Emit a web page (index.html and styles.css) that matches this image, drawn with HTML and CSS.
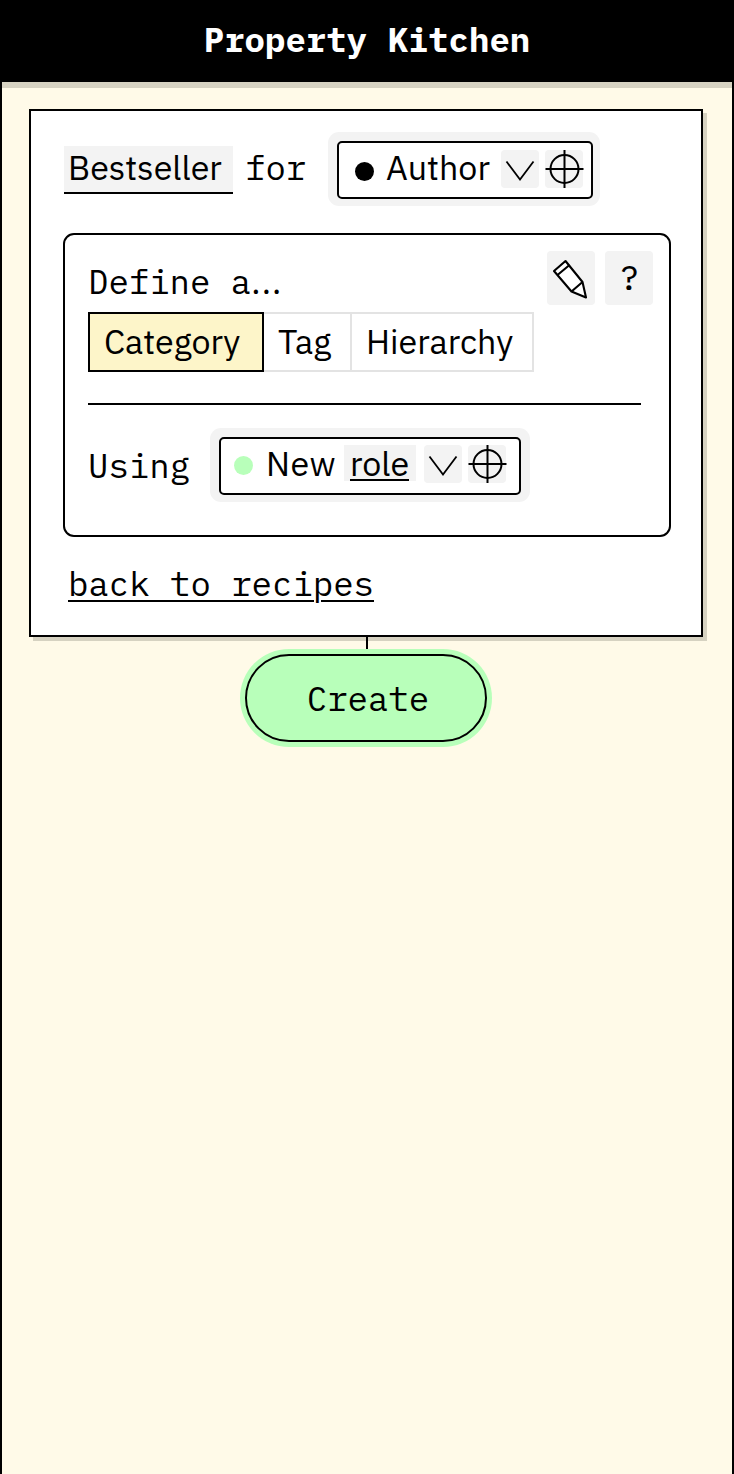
FILE: index.html
```html
<!DOCTYPE html>
<html lang="en">
<head>
<meta charset="utf-8">
<title>Property Kitchen</title>
<link rel="stylesheet" href="styles.css">
</head>
<body>
<div class="app">
  <header class="header"><h1 class="title">Property Kitchen</h1></header>
  <main class="main">
    <section class="card">
      <div class="subject">
        <span class="name-field"><span class="t-bestseller">Bestseller</span></span>
        <span class="for">for</span>
        <div class="picker picker-author">
          <i class="dot"></i>
          <span class="sans t-author">Author</span>
          <svg class="icon chevron" viewBox="0 0 38 38"><path d="M5.500 11.500L19 29.500L32.500 11.500"/></svg>
          <svg class="icon" viewBox="0 0 38 38"><circle cx="19.500" cy="19" r="14"/><path d="M.5 19H38.500M19.500 0V38"/></svg>
        </div>
      </div>
      <div class="panel">
        <div class="panel-head">
          <span class="label">Define a<span class="ellipsis">...</span></span>
          <div class="tools">
            <button class="tool"><svg class="pencil" viewBox="0 0 48 54"><path class="body" d="M7 20L18.500 10L35.500 31L39 46.500L24.500 40.500Z"/><path d="M10.500 24L22.500 14M24.500 40.500L35.500 31"/></svg></button>
            <button class="tool help">?</button>
          </div>
        </div>
        <div class="tabs">
          <button class="tab active"><span class="t-category">Category</span></button>
          <button class="tab tab-tag"><span class="t-tag">Tag</span></button>
          <button class="tab tab-hier"><span class="t-hier">Hierarchy</span></button>
        </div>
        <hr class="divider">
        <div class="using">
          <span class="label using-label">Using</span>
          <div class="picker picker-role">
            <i class="dot green"></i>
            <span class="sans t-new">New</span>
            <span class="role"><span class="role-text">role</span></span>
            <svg class="icon chevron" viewBox="0 0 38 38"><path d="M5.500 11.500L19 29.500L32.500 11.500"/></svg>
            <svg class="icon" viewBox="0 0 38 38"><circle cx="19.500" cy="19" r="14"/><path d="M.5 19H38.500M19.500 0V38"/></svg>
          </div>
        </div>
      </div>
      <a class="back">back to recipes</a>
    </section>
    <div class="connector"></div>
    <button class="create">Create</button>
  </main>
</div>
</body>
</html>
```
FILE: styles.css
```css
* { box-sizing: border-box; }
body { margin: 0; background: #fffae8; color: #000; font: 34px/44px "IBM Plex Mono", "Liberation Mono", monospace; }
button { margin: 0; padding: 0; border: 0; background: none; color: inherit; font: inherit; }
.app { min-height: 1474px; border: solid #000; border-width: 0 2px; }
.header { height: 82px; background: #000; color: #fff; box-shadow: 0 6px #d6d2c1; text-align: center; }
.title { margin: 0; padding-top: 17px; font-size: 34px; line-height: 44px; font-weight: 700; }
.main { display: flex; flex-direction: column; align-items: center; padding-top: 27px; }
.card { width: 674px; height: 528px; margin-right: 2px; border: 2px solid #000; background: #fff; box-shadow: 4px 4px #d6d2c1; padding: 21px 30px 0 32px; white-space: nowrap; }
.subject { display: flex; height: 74px; }
.name-field { width: 169px; height: 48px; margin: 14px 0 0 1px; padding-left: 4px; background: #f3f3f3; border-bottom: 2px solid #000; line-height: 42px; }
.name-field, .sans, .tab, .role { font-family: "IBM Plex Sans", "Open Sans", sans-serif; font-size: 34px; }
.for { margin: 13px 0 0 12px; width: 61px; }
.picker { display: flex; height: 74px; padding: 9px; margin-left: 22px; border-radius: 11px; background: #f3f3f3; position: relative; }
.picker::before { content: ""; position: absolute; inset: 9px 7px 7px 9px; border: 2px solid #000; border-radius: 5px; background: #fff; }
.picker > * { position: relative; }
.picker-author { width: 272px; }
.dot { flex: none; width: 19px; height: 19px; margin: 21px 0 0 18px; border-radius: 50%; background: #000; }
.dot.green { background: #b8ffba; margin: 19px 0 0 15px; }
.t-author { width: 115px; margin: 4px 0 0 12px; }
.icon { flex: none; width: 38px; height: 38px; margin: 9px 6px 0 0; border-radius: 4px; background: #f3f3f3; fill: none; stroke: #000; stroke-width: 2; overflow: visible; }
.icon.chevron { stroke-width: 1.8; }
.panel { width: 608px; height: 304px; margin-top: 27px; border: 2px solid #000; border-radius: 11px; padding: 16px 16px 0 23px; }
.panel-head { display: flex; justify-content: space-between; height: 61px; }
.label { padding-top: 8px; }
.ellipsis { font-family: "IBM Plex Sans", "Open Sans", sans-serif; letter-spacing: 1.2px; }
.tools { display: flex; gap: 10px; }
.tool { width: 48px; height: 54px; border-radius: 4px; background: #f3f3f3; }
.help { padding: 0 0 2px 1px; }
.pencil { display: block; width: 48px; height: 54px; fill: none; stroke: #000; stroke-width: 2.1; stroke-linejoin: round; }
.pencil .body { fill: #fff; }
.tabs { display: flex; height: 60px; }
.tab { width: 176px; height: 60px; border: 2px solid #e3e3e3; padding: 0 0 2px 14px; text-align: left; }
.tab.active { background: #fdf5c9; border-color: #000; position: relative; }
.tab-tag { width: 90px; margin-left: -2px; }
.tab-hier { width: 184px; margin-left: -2px; padding-left: 14px; }
.divider { width: 553px; height: 2px; margin: 31px 0 23px; border: 0; background: #000; }
.using { display: flex; }
.using-label { width: 122px; padding-top: 15px; }
.picker-role { width: 320px; margin-left: 0; }
.picker-role::before { right: 9px; }
.picker-role .icon { margin-top: 8px; }
.t-new { margin: 4px 0 0 13px; width: 78px; letter-spacing: 0.5px; }
.role { width: 72px; height: 36px; margin: 8px 8px 0 0; padding-left: 6px; background: #f3f3f3; }
.role-text { display: block; width: 59px; height: 36px; border-bottom: 2px solid #000; line-height: 37px; }
.back { display: inline-block; margin: 24px 0 0 5px; text-decoration: underline; text-decoration-thickness: 2px; text-underline-offset: 4px; }
.connector { width: 2px; height: 12px; background: #000; }
.create { width: 242px; height: 88px; margin-top: 5px; margin-right: 2px; padding-left: 4px; border: 2px solid #000; border-radius: 44px; background: #b8ffba; box-shadow: 0 0 0 5px #b8ffba; }
```
